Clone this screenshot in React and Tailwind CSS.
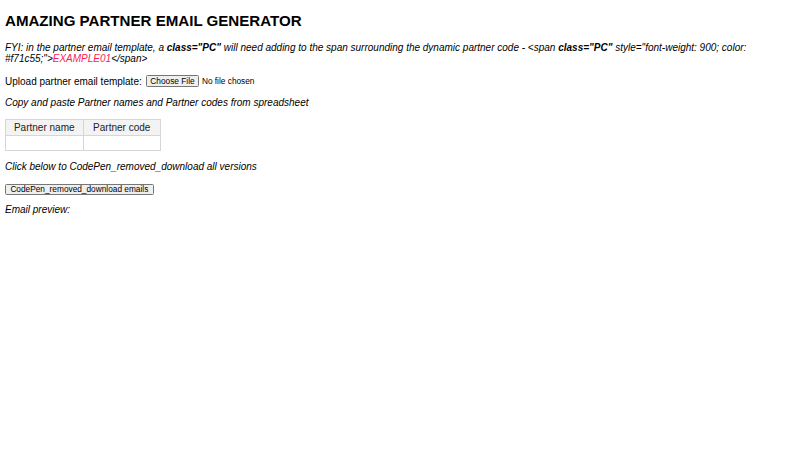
import React from 'react'

export default function App() {
  return (
    <div className="min-h-screen bg-white px-[5px] text-black font-['Liberation_Sans',Arial,sans-serif] text-[10px] leading-[11.4px]">
      <h2 className="pt-[12.4px] text-[15.1px] font-bold leading-[17px]">AMAZING PARTNER EMAIL GENERATOR</h2>

      <p className="mt-[12.6px] italic">
        FYI: in the partner email template, a <b>class="PC"</b> will need adding to the span surrounding the dynamic partner code - &lt;span <b>class="PC"</b> style="font-weight: 900; color: #f71c55;"&gt;<span className="text-[#f71c55]">EXAMPLE01</span>&lt;/span&gt;
      </p>

      <div className="mt-[10.7px] flex h-[11.6px] items-center">
        <span>Upload partner email template:&nbsp;</span>
        <button className="ml-[1px] h-[11.6px] rounded-[1.5px] border border-[#767676] bg-[#efefef] px-[3.8px] text-[8.3px] leading-[9px]">Choose File</button>
        <span className="ml-[2.5px] text-[8.3px]">No file chosen</span>
      </div>

      <p className="mt-[10.2px] italic">Copy and paste Partner names and Partner codes from spreadsheet</p>

      <table className="mt-[10.3px] w-[156px] border-collapse text-[#222]">
        <thead>
          <tr className="h-[16.3px] bg-[#f3f3f3]">
            <th className="w-[78px] border border-[#d6d6d6] p-0 text-center font-normal">Partner name</th>
            <th className="w-[78px] border border-[#d6d6d6] p-0 text-center font-normal">Partner code</th>
          </tr>
        </thead>
        <tbody>
          <tr className="h-[15px]">
            <td className="border border-[#d6d6d6] p-0"></td>
            <td className="border border-[#d6d6d6] p-0"></td>
          </tr>
        </tbody>
      </table>

      <p className="mt-[9.4px] italic">Click below to CodePen_removed_download all versions</p>

      <button className="mt-[12.2px] block h-[11px] w-[148.7px] rounded-[1.5px] border border-[#767676] bg-[#efefef] px-[3px] text-[8.3px] leading-[9px]">CodePen_removed_download emails</button>

      <p className="mt-[8.7px] italic">Email preview:</p>
    </div>
  )
}
